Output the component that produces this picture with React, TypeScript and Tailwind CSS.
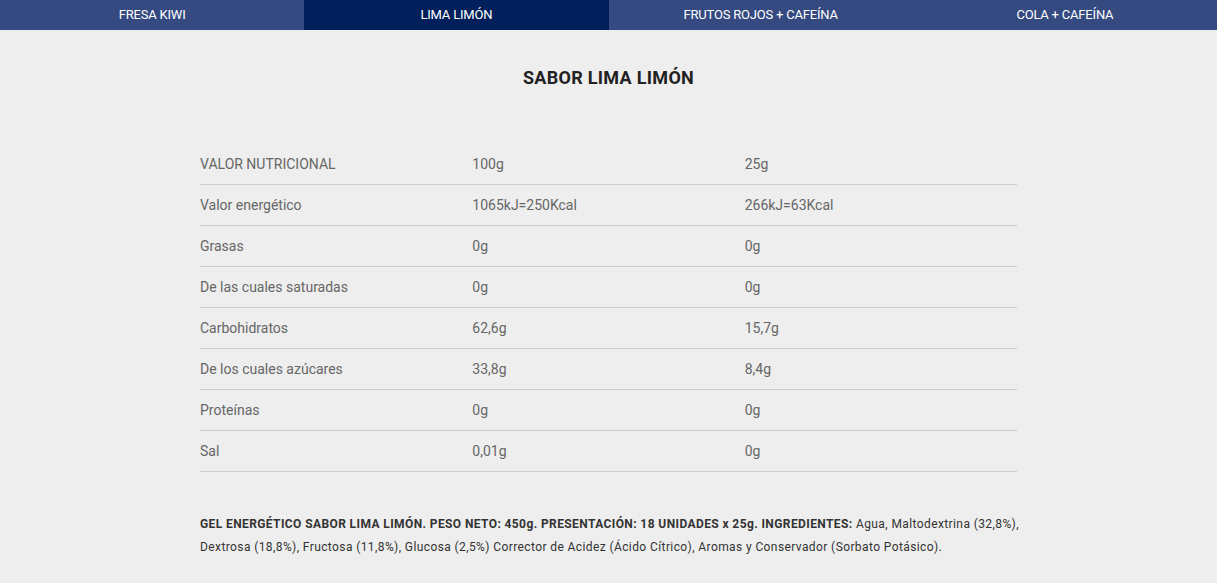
import React from 'react'

const tabs = ['FRESA KIWI', 'LIMA LIMÓN', 'FRUTOS ROJOS + CAFEÍNA', 'COLA + CAFEÍNA']

const rows: [string, string, string][] = [
  ['Valor energético', '1065kJ=250Kcal', '266kJ=63Kcal'],
  ['Grasas', '0g', '0g'],
  ['De las cuales saturadas', '0g', '0g'],
  ['Carbohidratos', '62,6g', '15,7g'],
  ['De los cuales azúcares', '33,8g', '8,4g'],
  ['Proteínas', '0g', '0g'],
  ['Sal', '0,01g', '0g'],
]

export default function App() {
  return (
    <div className="min-h-[583px] bg-[#eeeeee] font-['Roboto',sans-serif]">
      {/* pestañas de sabores */}
      <div className="grid grid-cols-4 h-[30px] bg-[#344a80]">
        {tabs.map((t, i) => (
          <div
            key={t}
            className={`flex items-center justify-center text-[13px] text-white tracking-[-0.2px] ${
              i === 1 ? 'bg-[#001f5b]' : ''
            }`}
          >
            {t}
          </div>
        ))}
      </div>

      <h2 className="pt-[35px] text-center text-[18px] font-bold text-[#222] leading-[26px] tracking-[0.3px]">
        SABOR LIMA LIMÓN
      </h2>

      <div className="ml-[200px] mt-[53px] w-[817px]">
        <div className="grid grid-cols-3 h-[41px] items-center border-b border-[#cccccc] text-[14px] text-[#666]">
          <div>VALOR NUTRICIONAL</div>
          <div>100g</div>
          <div>25g</div>
        </div>
        {rows.map((r) => (
          <div
            key={r[0]}
            className="grid grid-cols-3 h-[41px] items-center border-b border-[#cccccc] text-[14px] text-[#666]"
          >
            <div>{r[0]}</div>
            <div>{r[1]}</div>
            <div>{r[2]}</div>
          </div>
        ))}
      </div>

      <p className="ml-[200px] mt-[41px] w-[835px] text-[12px] leading-[23px] tracking-[0.4px] text-[#333]">
        <b>
          GEL ENERGÉTICO SABOR LIMA LIMÓN. PESO NETO: 450g. PRESENTACIÓN: 18 UNIDADES x 25g.
          INGREDIENTES:
        </b>{' '}
        Agua, Maltodextrina (32,8%), Dextrosa (18,8%), Fructosa (11,8%), Glucosa (2,5%) Corrector de
        Acidez (Ácido Cítrico), Aromas y Conservador (Sorbato Potásico).
      </p>
    </div>
  )
}
